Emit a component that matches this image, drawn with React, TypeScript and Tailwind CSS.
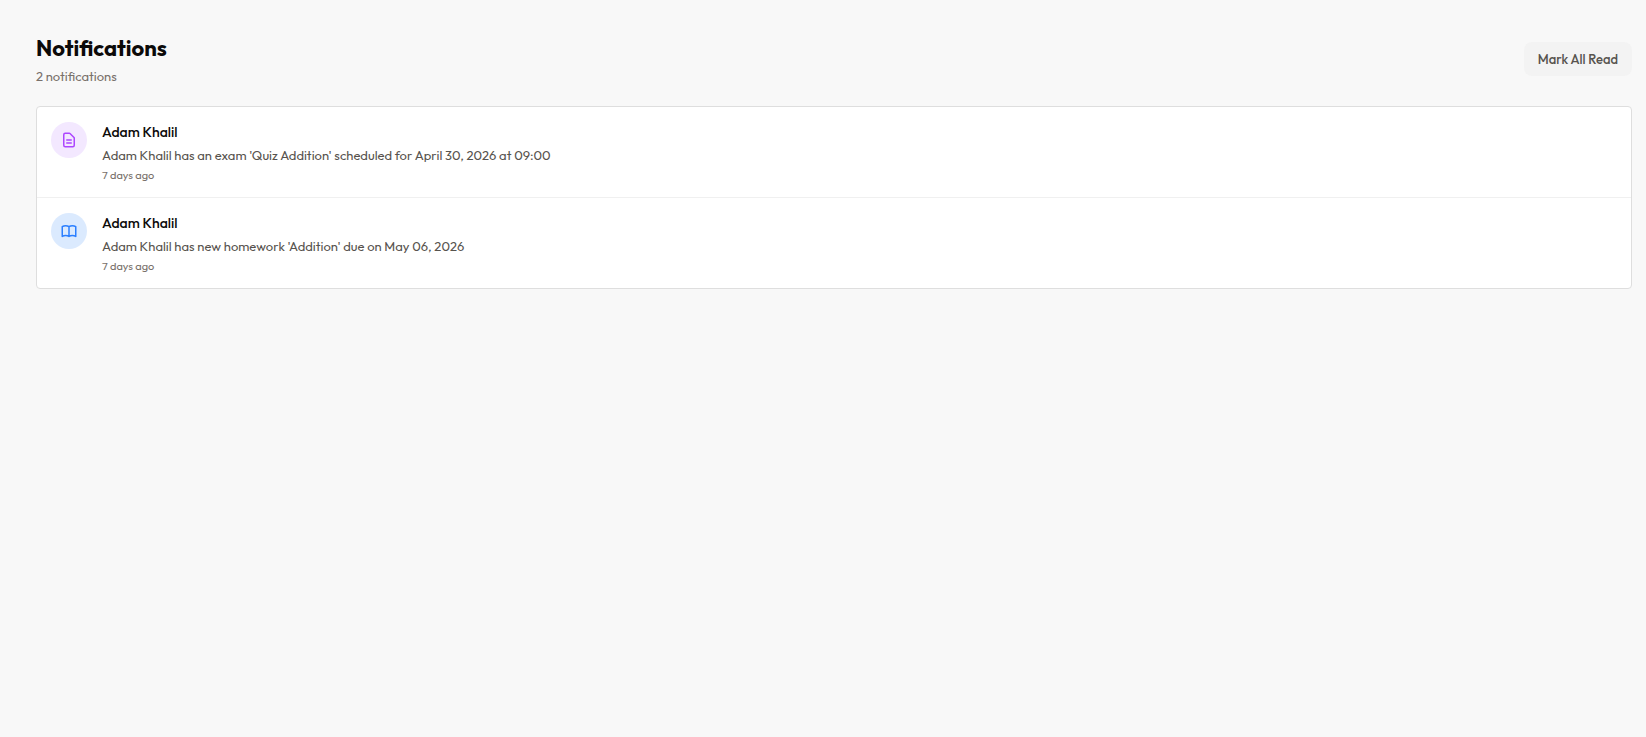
import React from 'react';

type NotificationType = 'exam' | 'homework';

interface Notification {
  id: number;
  type: NotificationType;
  title: string;
  message: string;
  time: string;
}

const NOTIFICATIONS: Notification[] = [
  {
    id: 1,
    type: 'exam',
    title: 'Adam Khalil',
    message: "Adam Khalil has an exam 'Quiz Addition' scheduled for April 30, 2026 at 09:00",
    time: '7 days ago',
  },
  {
    id: 2,
    type: 'homework',
    title: 'Adam Khalil',
    message: "Adam Khalil has new homework 'Addition' due on May 06, 2026",
    time: '7 days ago',
  },
];

const TYPE_STYLES: Record<NotificationType, { circle: string; path: string }> = {
  exam: {
    circle: 'bg-[#f3e8ff] text-[#ad46ff]',
    path: 'M9 12h6m-6 4h6m2 5H7a2 2 0 01-2-2V5a2 2 0 012-2h5.586a1 1 0 01.707.293l5.414 5.414a1 1 0 01.293.707V19a2 2 0 01-2 2z',
  },
  homework: {
    circle: 'bg-[#dbeafe] text-[#2b7fff]',
    path: 'M12 6.253v13m0-13C10.832 5.477 9.246 5 7.5 5S4.168 5.477 3 6.253v13C4.168 18.477 5.754 18 7.5 18s3.332.477 4.5 1.253m0-13C13.168 5.477 14.754 5 16.5 5c1.747 0 3.332.477 4.5 1.253v13C19.832 18.477 18.247 18 16.5 18c-1.746 0-3.332.477-4.5 1.253',
  },
};

function NotificationItem({ notification }: { notification: Notification }) {
  const { circle, path } = TYPE_STYLES[notification.type];

  return (
    <li className="flex items-start gap-[15px] px-[14px] py-[15px]">
      <div className={`flex size-9 shrink-0 items-center justify-center rounded-full ${circle}`}>
        <svg className="size-[18px]" fill="none" viewBox="0 0 24 24" stroke="currentColor" strokeWidth={2} aria-hidden="true">
          <path strokeLinecap="round" strokeLinejoin="round" d={path} />
        </svg>
      </div>
      <div className="min-w-0 flex-1">
        <h2 className="text-[14px] leading-[21px] font-medium text-[#0c0a09]">{notification.title}</h2>
        <p className="mt-[2px] text-[13px] leading-5 text-[#57534e]">{notification.message}</p>
        <p className="mt-[3px] text-[11px] leading-[14px] text-[#79716b]">{notification.time}</p>
      </div>
    </li>
  );
}

export default function App() {
  return (
    <div className="min-h-screen bg-[#f8f8f8] pt-8 pr-[14px] pb-8 pl-9 font-['Outfit','Lato',sans-serif]">
      <div className="mb-5 flex items-center justify-between">
        <div>
          <h1 className="text-[22px] leading-8 font-bold text-[#0c0a09]">Notifications</h1>
          <p className="mt-[2px] text-[13px] leading-5 text-[#79716b]">{NOTIFICATIONS.length} notifications</p>
        </div>
        <button type="button" className="rounded-lg bg-[#f3f3f3] px-[14px] py-[7px] text-[13px] leading-5 font-medium text-[#57534e]">
          Mark All Read
        </button>
      </div>

      <ul className="divide-y divide-[#f0f0f0] rounded-[4px] border border-[#dedede] bg-white">
        {NOTIFICATIONS.map((notification) => (
          <NotificationItem key={notification.id} notification={notification} />
        ))}
      </ul>
    </div>
  );
}
